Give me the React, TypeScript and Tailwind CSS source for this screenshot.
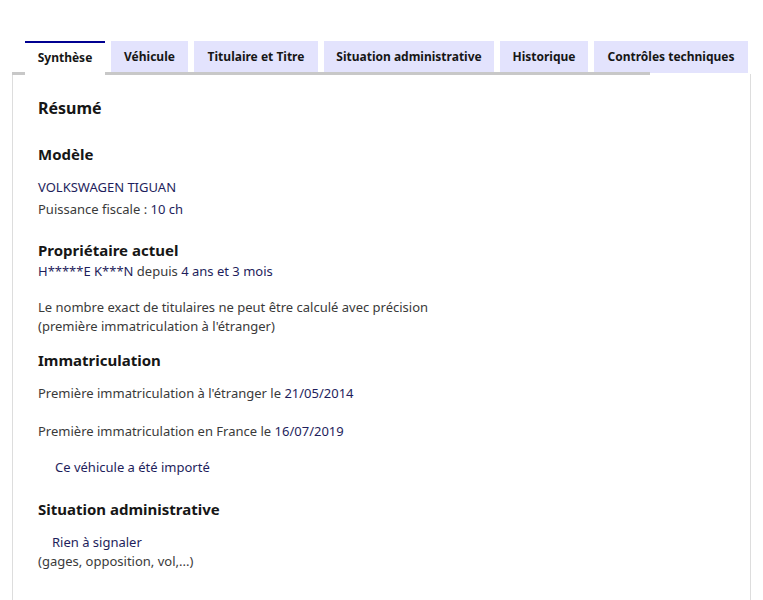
const tabs = [
  { label: "Synthèse", w: "w-[80px]" },
  { label: "Véhicule", w: "w-[77px]" },
  { label: "Titulaire et Titre", w: "w-[124px]" },
  { label: "Situation administrative", w: "w-[170px]" },
  { label: "Historique", w: "w-[88px]" },
  { label: "Contrôles techniques", w: "w-[154px]" },
];

function Value({ children }: { children: React.ReactNode }) {
  return <span className="text-[#1e1e5c]">{children}</span>;
}

export default function App() {
  return (
    <div className="h-[600px] overflow-hidden bg-white font-['Noto_Sans',sans-serif] text-[13px] text-[#3a3a3a]">
      <div className="pl-[12px] pr-[12px] pt-[41px]">
        <div className="relative flex gap-[6px] pl-[13px]">
          {tabs.map((t, i) => (
            <div
              key={t.label}
              className={
                i === 0
                  ? `relative z-10 flex h-[34px] ${t.w} items-center justify-center whitespace-nowrap border-t-2 border-[#000091] bg-white pb-[2px] text-[12px] font-bold text-[#161616]`
                  : `flex h-[32px] ${t.w} items-center justify-center whitespace-nowrap bg-[#e3e3fd] text-[12px] font-bold text-[#161616]`
              }
            >
              {t.label}
            </div>
          ))}
          <div className="absolute bottom-0 left-0 h-[3px] w-[638px] bg-[#c8c8c8]" />
        </div>
        <div className="-mt-[1px] h-[540px] border-x border-[#dddddd] px-[25px] pt-[22px]">
          <h1 className="text-[16px] font-bold leading-[24px] text-[#161616]">Résumé</h1>
          <h2 className="mt-[22px] text-[15px] font-bold leading-[24px] text-[#161616]">Modèle</h2>
          <p className="mt-[10px] leading-[22px]">
            <Value>VOLKSWAGEN TIGUAN</Value>
          </p>
          <p className="leading-[22px]">
            Puissance fiscale : <Value>10 ch</Value>
          </p>
          <h2 className="mt-[18px] text-[15px] font-bold leading-[24px] text-[#161616]">
            Propriétaire actuel
          </h2>
          <p className="leading-[19px]">
            <Value>H*****E K***N</Value> depuis <Value>4 ans et 3 mois</Value>
          </p>
          <p className="mt-[17px] leading-[19px]">
            Le nombre exact de titulaires ne peut être calculé avec précision
            <br />
            (première immatriculation à l'étranger)
          </p>
          <h2 className="mt-[12px] text-[15px] font-bold leading-[24px] text-[#161616]">
            Immatriculation
          </h2>
          <p className="mt-[11px] leading-[20px]">
            Première immatriculation à l'étranger le <Value>21/05/2014</Value>
          </p>
          <p className="mt-[18px] leading-[20px]">
            Première immatriculation en France le <Value>16/07/2019</Value>
          </p>
          <p className="mt-[16px] pl-[17px] leading-[20px]">
            <Value>Ce véhicule a été importé</Value>
          </p>
          <h2 className="mt-[20px] text-[15px] font-bold leading-[24px] text-[#161616]">
            Situation administrative
          </h2>
          <p className="mt-[12px] pl-[14px] leading-[19px]">
            <Value>Rien à signaler</Value>
          </p>
          <p className="leading-[19px]">(gages, opposition, vol,...)</p>
        </div>
      </div>
    </div>
  );
}
